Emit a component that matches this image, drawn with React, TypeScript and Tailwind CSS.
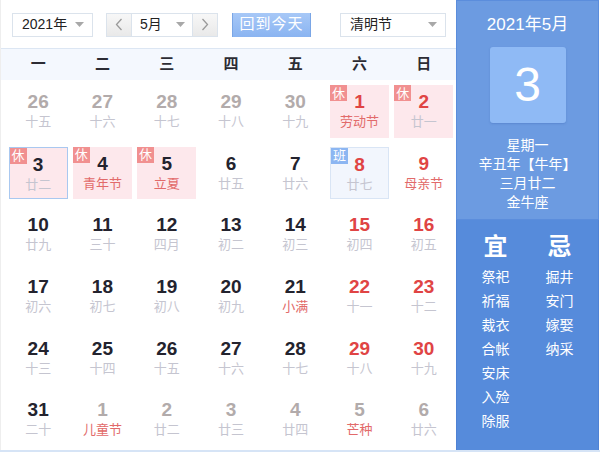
import React from 'react';

const FONT = '"Liberation Sans", "Noto Sans CJK SC", sans-serif';
const WEEK = ['一', '二', '三', '四', '五', '六', '日'];

type Day = {
  d: number;
  lunar: string;
  other?: boolean;
  red?: boolean;
  fest?: boolean;
  tag?: '休' | '班';
  box?: 'rest' | 'today' | 'work';
};

const ROWS: Day[][] = [
  [
    { d: 26, lunar: '十五', other: true },
    { d: 27, lunar: '十六', other: true },
    { d: 28, lunar: '十七', other: true },
    { d: 29, lunar: '十八', other: true },
    { d: 30, lunar: '十九', other: true },
    { d: 1, lunar: '劳动节', red: true, fest: true, tag: '休', box: 'rest' },
    { d: 2, lunar: '廿一', red: true, tag: '休', box: 'rest' },
  ],
  [
    { d: 3, lunar: '廿二', tag: '休', box: 'today' },
    { d: 4, lunar: '青年节', fest: true, tag: '休', box: 'rest' },
    { d: 5, lunar: '立夏', fest: true, tag: '休', box: 'rest' },
    { d: 6, lunar: '廿五' },
    { d: 7, lunar: '廿六' },
    { d: 8, lunar: '廿七', red: true, tag: '班', box: 'work' },
    { d: 9, lunar: '母亲节', red: true, fest: true },
  ],
  [
    { d: 10, lunar: '廿九' },
    { d: 11, lunar: '三十' },
    { d: 12, lunar: '四月' },
    { d: 13, lunar: '初二' },
    { d: 14, lunar: '初三' },
    { d: 15, lunar: '初四', red: true },
    { d: 16, lunar: '初五', red: true },
  ],
  [
    { d: 17, lunar: '初六' },
    { d: 18, lunar: '初七' },
    { d: 19, lunar: '初八' },
    { d: 20, lunar: '初九' },
    { d: 21, lunar: '小满', fest: true },
    { d: 22, lunar: '十一', red: true },
    { d: 23, lunar: '十二', red: true },
  ],
  [
    { d: 24, lunar: '十三' },
    { d: 25, lunar: '十四' },
    { d: 26, lunar: '十五' },
    { d: 27, lunar: '十六' },
    { d: 28, lunar: '十七' },
    { d: 29, lunar: '十八', red: true },
    { d: 30, lunar: '十九', red: true },
  ],
  [
    { d: 31, lunar: '二十' },
    { d: 1, lunar: '儿童节', other: true, fest: true },
    { d: 2, lunar: '廿二', other: true },
    { d: 3, lunar: '廿三', other: true },
    { d: 4, lunar: '廿四', other: true },
    { d: 5, lunar: '芒种', other: true, fest: true },
    { d: 6, lunar: '廿六', other: true },
  ],
];

const YI = ['祭祀', '祈福', '裁衣', '合帐', '安床', '入殓', '除服'];
const JI = ['掘井', '安门', '嫁娶', '纳采'];

function Caret() {
  return (
    <svg width="9" height="5" viewBox="0 0 9 5" className="shrink-0">
      <path d="M0 0h9L4.5 5z" fill="#a8a8a8" />
    </svg>
  );
}

function Select({ label, className }: { label: string; className: string }) {
  return (
    <div className={`flex h-[24px] items-center justify-between border border-[#dbe3ec] bg-white pl-[9px] pr-[8px] text-[14px] text-[#222] ${className}`}>
      <span>{label}</span>
      <Caret />
    </div>
  );
}

function ArrowBtn({ dir }: { dir: 'l' | 'r' }) {
  return (
    <div className="flex h-full w-[24px] items-center justify-center bg-gradient-to-b from-[#f7f7f7] to-[#e9e9e9]">
      <svg width="8" height="13" viewBox="0 0 8 13">
        <path d={dir === 'l' ? 'M6.5 1 1.5 6.5l5 5.5' : 'M1.5 1l5 5.5-5 5.5'} fill="none" stroke="#9a9a9a" strokeWidth="1.3" />
      </svg>
    </div>
  );
}

function Cell({ day }: { day: Day }) {
  const boxCls =
    day.box === 'rest'
      ? 'bg-[#fde8ec]'
      : day.box === 'today'
        ? 'bg-[#fde8ec] border border-[#a9c8f0]'
        : day.box === 'work'
          ? 'bg-[#f2f6fd] border border-[#d9e5f5]'
          : '';
  const numCls = day.other
    ? 'text-[#b2abab]'
    : day.red
      ? 'text-[#e04444]'
      : 'text-[#23232e]';
  const lunarCls = day.fest ? 'text-[#e26a6a]' : 'text-[#c5c5d0]';
  return (
    <div className="px-[2.5px] pb-[4px] pt-[5px]">
      <div className={`relative flex h-full flex-col items-center pt-[7px] ${boxCls}`}>
        {day.tag && (
          <span
            className={`absolute left-0 top-0 flex h-[16px] w-[17px] items-center justify-center text-[13px] leading-none text-white ${
              day.tag === '休' ? 'bg-[#f19090]' : 'bg-[#8cb6f2]'
            }`}
          >
            {day.tag}
          </span>
        )}
        <span className={`text-[19px] font-bold leading-[20px] ${numCls}`}>{day.d}</span>
        <span className={`mt-[2px] text-[13px] leading-[16px] ${lunarCls}`}>{day.lunar}</span>
      </div>
    </div>
  );
}

export default function App() {
  return (
    <div className="flex h-[452px] w-[600px] border-b-2 border-[#d6e4f6] bg-white" style={{ fontFamily: FONT }}>
      <div className="flex w-[456px] flex-col border-l border-[#eeeeee]">
        <div className="flex h-[48px] items-center pl-[11px] pt-[1px]">
          <Select label="2021年" className="w-[81px]" />
          <div className="ml-[13px] flex h-[24px] w-[112px] border border-[#dbe3ec]">
            <ArrowBtn dir="l" />
            <div className="flex flex-1 items-center justify-between border-x border-[#dbe3ec] pl-[8px] pr-[7px] text-[14px] text-[#222]">
              <span>5月</span>
              <Caret />
            </div>
            <ArrowBtn dir="r" />
          </div>
          <button className="ml-[14px] flex h-[24px] w-[79px] items-center justify-center border-x border-[#7aa6e6] bg-gradient-to-b from-[#a7c8f7] to-[#8ab4f1] text-[15px] tracking-[1px] text-white">
            回到今天
          </button>
          <Select label="清明节" className="ml-[29px] w-[106px]" />
        </div>
        <div className="grid h-[32px] grid-cols-7 items-center border-t border-[#dce6f3] bg-[#f4f8fe] pl-[5px] text-[15px] font-bold text-[#2c2c34]">
          {WEEK.map((w) => (
            <span key={w} className="text-center">
              {w}
            </span>
          ))}
        </div>
        <div className="grid flex-1 grid-cols-7 grid-rows-6 pl-[5px]">
          {ROWS.flat().map((day, i) => (
            <Cell key={i} day={day} />
          ))}
        </div>
      </div>
      <div className="mr-[1px] flex flex-1 flex-col text-white">
        <div className="flex h-[220px] flex-col items-center border border-[#5b8ddc] bg-[#6c9be1]">
          <div className="mt-[14px] text-[17px] leading-[20px]">2021年5月</div>
          <div className="mt-[12px] flex h-[76px] w-[76px] items-center justify-center rounded-[3px] bg-[#8fbaf5] text-[48px] leading-none shadow-[0_1px_2px_rgba(60,100,180,0.35)]">
            3
          </div>
          <div className="mt-[13px] flex flex-col items-center text-[14px] leading-[19px]">
            <span>星期一</span>
            <span>辛丑年【牛年】</span>
            <span>三月廿二</span>
            <span>金牛座</span>
          </div>
        </div>
        <div className="flex flex-1 justify-center gap-[36px] border-x border-[#4f82d4] bg-[#568bdb] pt-[13px]">
          <div className="flex flex-col items-center">
            <span className="mb-[4px] text-[24px] font-bold leading-[28px]">宜</span>
            {YI.map((t) => (
              <span key={t} className="text-[14px] leading-[24px]">
                {t}
              </span>
            ))}
          </div>
          <div className="flex flex-col items-center">
            <span className="mb-[4px] text-[24px] font-bold leading-[28px]">忌</span>
            {JI.map((t) => (
              <span key={t} className="text-[14px] leading-[24px]">
                {t}
              </span>
            ))}
          </div>
        </div>
      </div>
    </div>
  );
}
